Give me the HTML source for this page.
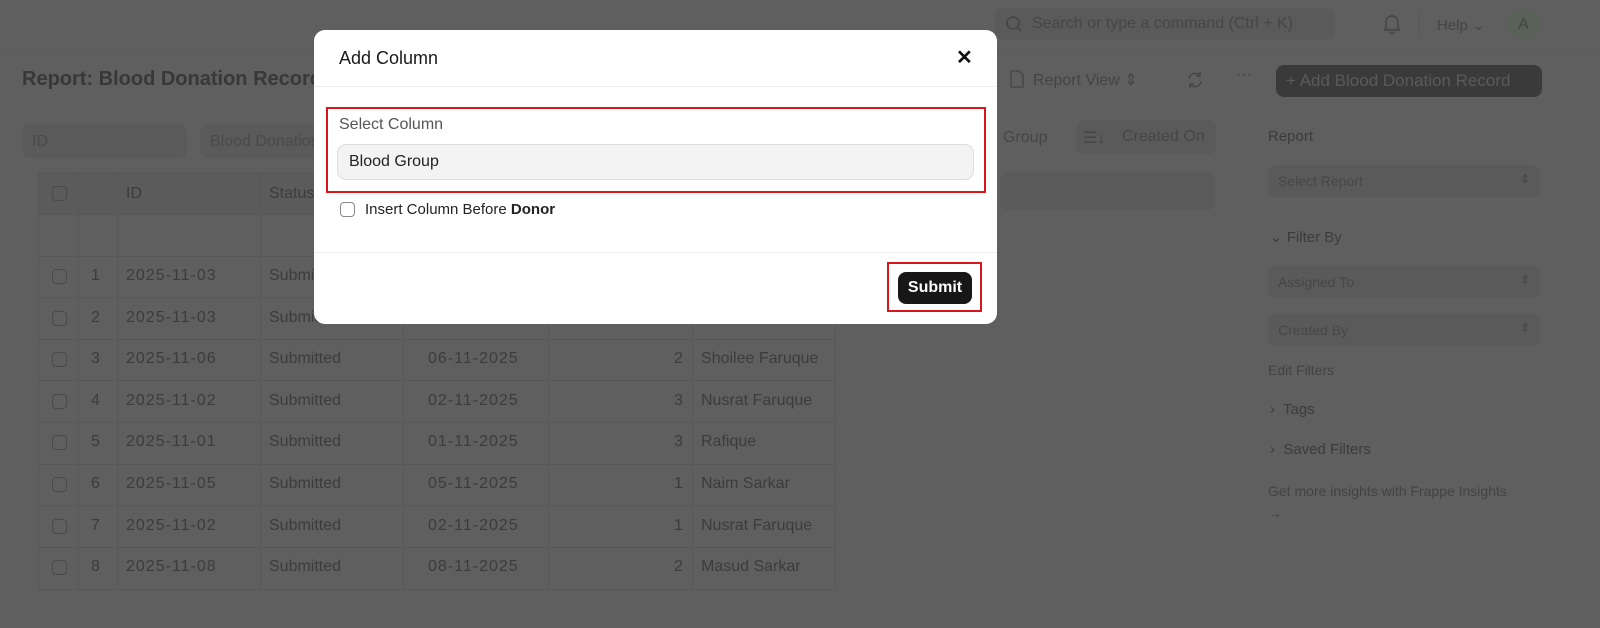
<!DOCTYPE html>
<html><head><meta charset="utf-8"><style>
*{box-sizing:border-box;margin:0;padding:0}
body{width:1600px;height:628px;overflow:hidden;background:#5f5f5f;font-family:"Liberation Sans",sans-serif;position:relative;color:#3a3a3a}
.a{position:absolute;white-space:nowrap}
.d{color:#3c3c3c;font-size:16px}
.box{position:absolute;background:#5a5a5a;border-radius:8px}
.cb{position:absolute;width:15px;height:15px;border:1.5px solid #4a4a4a;border-radius:4px}
.vl{position:absolute;width:1px;background:#585858;top:172px;height:417px}
.hl{position:absolute;height:1px;background:#585858;left:38px;width:797px}
</style></head><body>
<!-- top bar -->
<div class="box" style="left:995px;top:8px;width:340px;height:32px"></div>
<svg class="a" style="left:1005px;top:15px" width="18" height="18" viewBox="0 0 18 18"><circle cx="8" cy="8" r="6" fill="none" stroke="#444" stroke-width="1.5"/><path d="M12.5 12.5L16 16" stroke="#444" stroke-width="1.5"/></svg>
<div class="a d" style="left:1032px;top:15px;color:#464646">Search or type a command (Ctrl + K)</div>
<svg class="a" style="left:1383px;top:14px" width="18" height="20" viewBox="0 0 18 20"><path d="M3 14V8a6 6 0 0 1 12 0v6l1.5 2h-15z M7 17.5a2 2 0 0 0 4 0" fill="none" stroke="#444" stroke-width="1.4"/></svg>
<div class="a" style="left:1419px;top:12px;width:1px;height:26px;background:#585858"></div>
<div class="a d" style="left:1437px;top:16px;font-size:15px;color:#444">Help ⌄</div>
<div class="a" style="left:1507px;top:8px;width:33px;height:33px;border-radius:50%;background:#596159;color:#3d4a3d;text-align:center;line-height:33px;font-size:16px">A</div>
<div class="a" style="left:0;top:50px;width:1600px;height:1px;background:#5a5a5a"></div>
<div class="a" style="left:22px;top:68px;font-size:20px;font-weight:bold;color:#383838">Report: Blood Donation Record</div>
<svg class="a" style="left:1010px;top:70px" width="14" height="18" viewBox="0 0 14 18"><path d="M1 1h8l4 4v12H1z" fill="none" stroke="#444" stroke-width="1.3"/></svg>
<div class="a d" style="left:1033px;top:70px;color:#444">Report View ⇕</div>
<svg class="a" style="left:1185px;top:70px" width="20" height="20" viewBox="0 0 20 20"><path d="M4 9a6 6 0 0 1 11-3M16 11a6 6 0 0 1-11 3M15 2v4h-4M5 18v-4h4" fill="none" stroke="#444" stroke-width="1.4"/></svg>
<div class="a d" style="left:1236px;top:66px;color:#444">···</div>
<div class="a" style="left:1276px;top:65px;width:266px;height:32px;border-radius:8px;background:#3a3a3a;color:#5a5a5a;font-size:17px;line-height:32px;padding-left:10px">+ Add Blood Donation Record</div>
<!-- filters -->
<div class="box" style="left:22px;top:124px;width:165px;height:34px"></div>
<div class="a d" style="left:32px;top:133px;color:#4a4a4a">ID</div>
<div class="box" style="left:200px;top:124px;width:120px;height:34px"></div>
<div class="a d" style="left:210px;top:133px;color:#4a4a4a">Blood Donation</div>
<div class="a d" style="left:1003px;top:129px;color:#464646">Group</div>
<div class="box" style="left:1076px;top:120px;width:140px;height:34px"></div>
<div class="a d" style="left:1083px;top:128px;color:#444">☰↓</div>
<div class="a d" style="left:1122px;top:128px;color:#464646">Created On</div>
<div class="box" style="left:1000px;top:172px;width:215px;height:38px"></div>
<!-- table -->
<div class="a" style="left:38px;top:172px;width:797px;height:42px;background:#5b5b5b"></div>
<div class="vl" style="left:38px"></div><div class="vl" style="left:78px"></div><div class="vl" style="left:117px"></div><div class="vl" style="left:260px"></div><div class="vl" style="left:403px"></div><div class="vl" style="left:548px"></div><div class="vl" style="left:692px"></div><div class="vl" style="left:835px"></div>
<div class="hl" style="top:172px"></div><div class="hl" style="top:214px"></div><div class="hl" style="top:256px"></div><div class="hl" style="top:297px"></div><div class="hl" style="top:339px"></div><div class="hl" style="top:380px"></div><div class="hl" style="top:422px"></div><div class="hl" style="top:464px"></div><div class="hl" style="top:505px"></div><div class="hl" style="top:547px"></div><div class="hl" style="top:589px"></div>
<div class="cb" style="left:52px;top:186px"></div>
<div class="a d" style="left:126px;top:185px">ID</div><div class="a d" style="left:269px;top:185px">Status</div>
<div id="rows"></div>
<!-- sidebar -->
<div class="a" style="left:1268px;top:128px;font-size:15px;color:#3c3c3c">Report</div>
<div class="box" style="left:1268px;top:165px;width:272px;height:32px"></div><div class="a" style="left:1278px;top:173px;font-size:14px;color:#474747">Select Report</div><div class="a" style="left:1520px;top:172px;font-size:12px;color:#444">⇕</div>
<div class="a" style="left:1270px;top:228px;font-size:15px;color:#3c3c3c">⌄ Filter By</div>
<div class="box" style="left:1268px;top:266px;width:272px;height:32px"></div><div class="a" style="left:1278px;top:274px;font-size:14px;color:#474747">Assigned To</div><div class="a" style="left:1520px;top:273px;font-size:12px;color:#444">⇕</div>
<div class="box" style="left:1268px;top:314px;width:272px;height:32px"></div><div class="a" style="left:1278px;top:322px;font-size:14px;color:#474747">Created By</div><div class="a" style="left:1520px;top:321px;font-size:12px;color:#444">⇕</div>
<div class="a" style="left:1268px;top:362px;font-size:14px;color:#434343">Edit Filters</div>
<div class="a" style="left:1270px;top:401px;font-size:15px;color:#3c3c3c">›&nbsp; Tags</div>
<div class="a" style="left:1270px;top:441px;font-size:15px;color:#3c3c3c">›&nbsp; Saved Filters</div>
<div class="a" style="left:1268px;top:483px;font-size:14px;color:#434343">Get more insights with Frappe Insights</div>
<div class="a" style="left:1268px;top:505px;font-size:14px;color:#434343">→</div>
<!-- modal -->
<div class="a" style="left:314px;top:30px;width:683px;height:294px;background:#fff;border-radius:11px">
<div class="a" style="left:25px;top:18px;font-size:18px;color:#1a1a1a">Add Column</div>
<div class="a" style="left:642px;top:15px;font-size:20px;font-weight:bold;color:#111">✕</div>
<div class="a" style="left:0;top:56px;width:683px;height:1px;background:#eee"></div>
<div class="a" style="left:12px;top:77px;width:660px;height:86px;border:2px solid #d9161c"></div>
<div class="a" style="left:25px;top:86px;font-size:16px;color:#555">Select Column</div>
<div class="a" style="left:23px;top:114px;width:637px;height:36px;background:#f3f3f3;border:1.5px solid #ddd;border-radius:9px;font-size:16px;color:#222;line-height:33px;padding-left:11px">Blood Group</div>
<div class="cb" style="left:26px;top:172px;border-color:#888;background:#fff"></div>
<div class="a" style="left:51px;top:171px;font-size:15px;color:#222">Insert Column Before <b>Donor</b></div>
<div class="a" style="left:0;top:222px;width:683px;height:1px;background:#eee"></div>
<div class="a" style="left:573px;top:232px;width:95px;height:50px;border:2px solid #d9161c"></div>
<div class="a" style="left:584px;top:242px;width:74px;height:32px;background:#171717;border-radius:8px;color:#fff;font-size:16px;font-weight:bold;text-align:center;line-height:32px">Submit</div>
</div>
<script>
var r=[["2025-11-03","Submitted","03-11-2025","",""],["2025-11-03","Submitted","","",""],["2025-11-06","Submitted","06-11-2025","2","Shoilee Faruque"],["2025-11-02","Submitted","02-11-2025","3","Nusrat Faruque"],["2025-11-01","Submitted","01-11-2025","3","Rafique"],["2025-11-05","Submitted","05-11-2025","1","Naim Sarkar"],["2025-11-02","Submitted","02-11-2025","1","Nusrat Faruque"],["2025-11-08","Submitted","08-11-2025","2","Masud Sarkar"]];
var h="";r.forEach(function(x,i){var y=267+i*41.6;
h+='<div class="cb" style="left:52px;top:'+(y+2)+'px"></div><div class="a d" style="left:91px;top:'+y+'px">'+(i+1)+'</div><div class="a d" style="left:126px;top:'+y+'px;letter-spacing:1px">'+x[0]+'</div><div class="a d" style="left:269px;top:'+y+'px">'+x[1]+'</div><div class="a d" style="left:428px;top:'+y+'px;letter-spacing:1px">'+x[2]+'</div><div class="a d" style="left:674px;top:'+y+'px">'+x[3]+'</div><div class="a d" style="left:701px;top:'+y+'px">'+x[4]+'</div>';});
document.getElementById("rows").innerHTML=h;
</script>
</body></html>
